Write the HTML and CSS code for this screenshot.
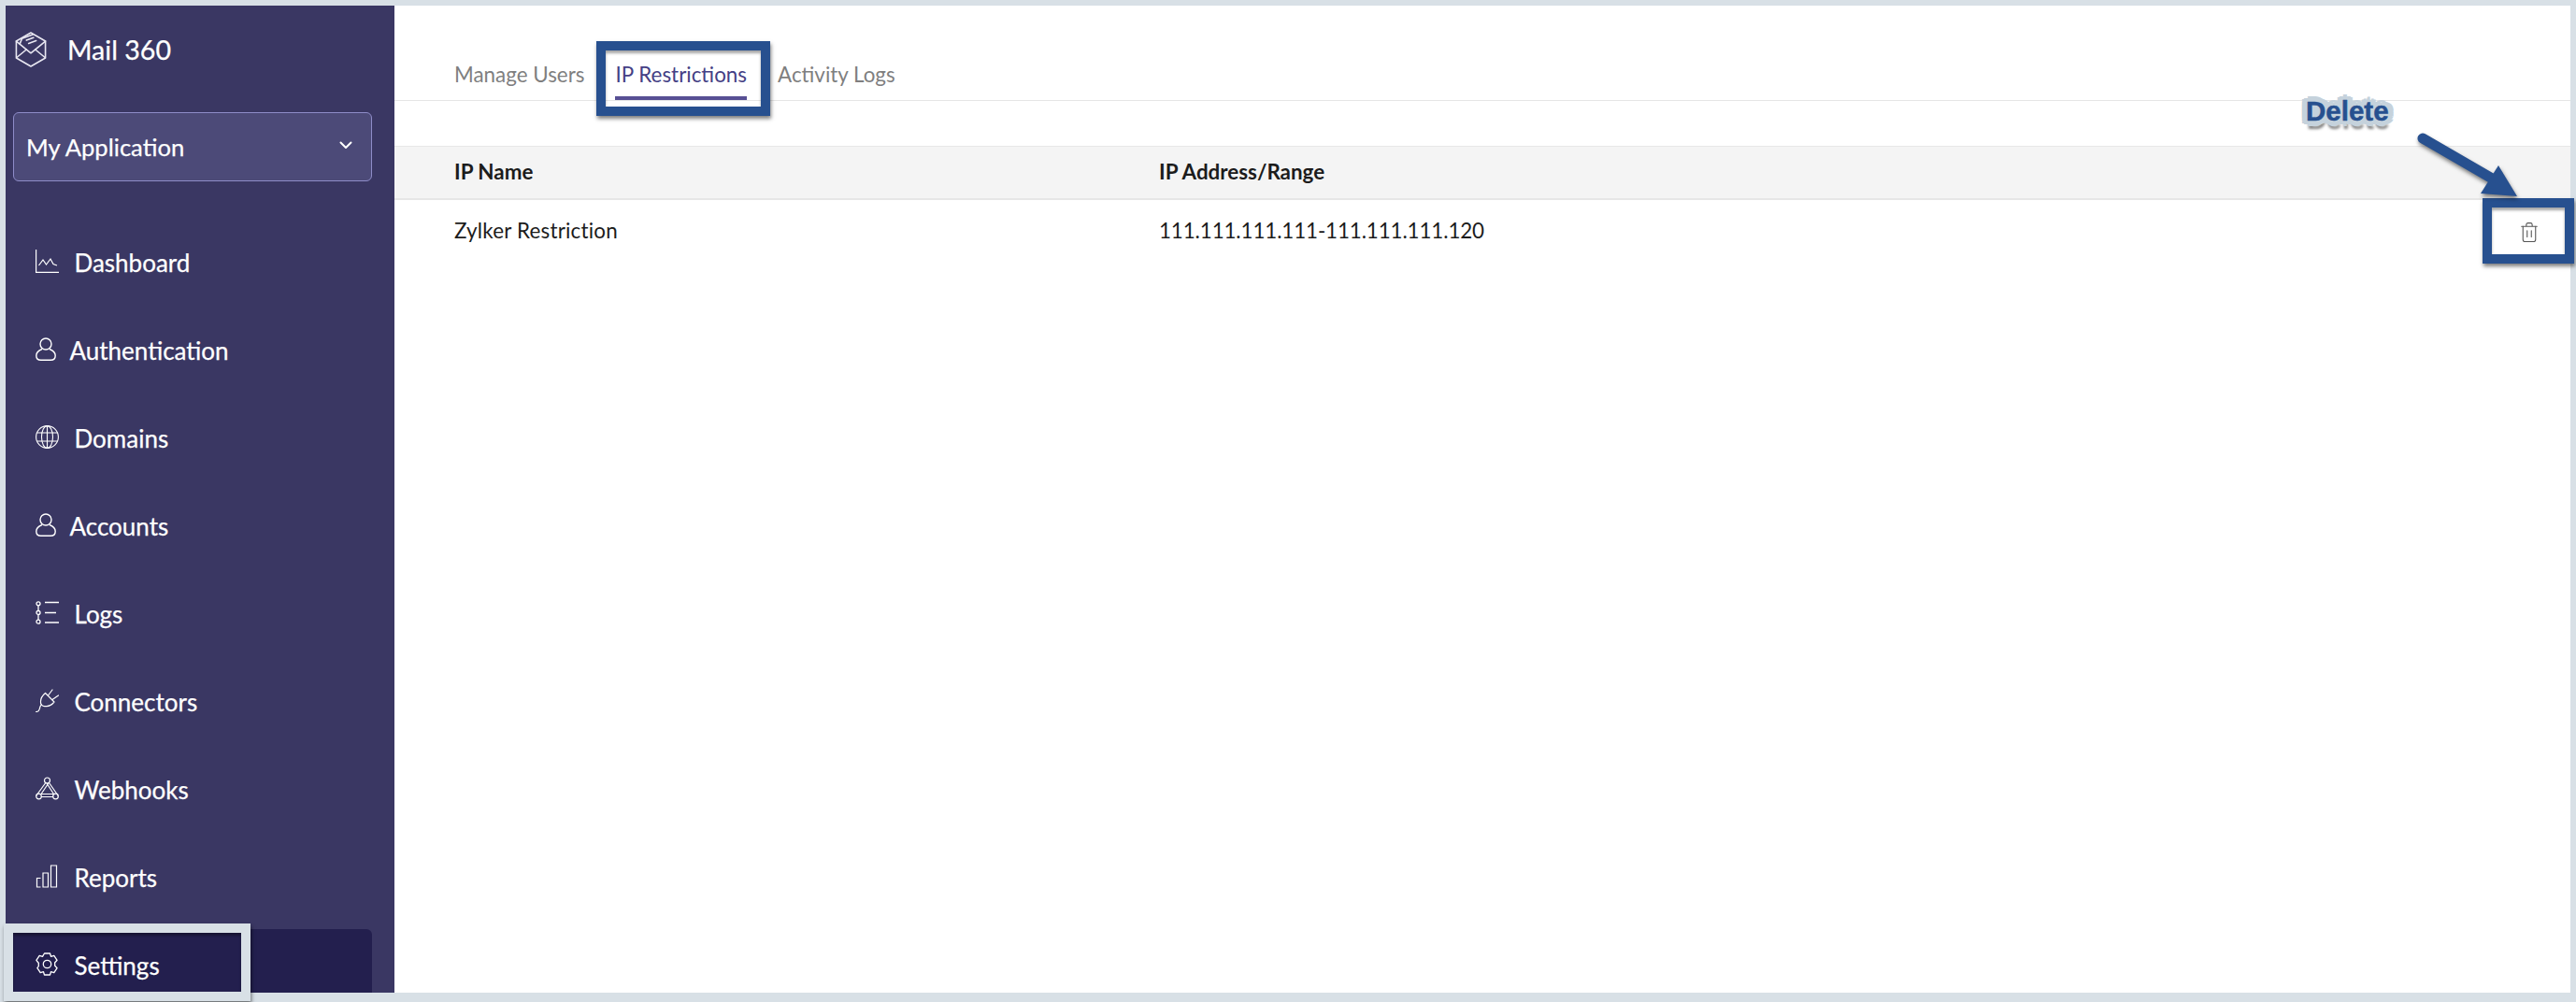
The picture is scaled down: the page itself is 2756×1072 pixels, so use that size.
FILE: index.html
```html
<!DOCTYPE html>
<html lang="en">
<head>
<meta charset="utf-8">
<title>Mail 360 - IP Restrictions</title>
<link rel="stylesheet" href="styles.css">
</head>
<body>
<div class="app">
  <aside class="sidebar">
    <div class="brand">
      <svg class="brand-logo" viewBox="0 0 36 40" fill="none" stroke="currentColor" stroke-width="1.7" stroke-linejoin="round" stroke-linecap="round">
        <path d="M18 1 34.500 10.500v19L18 39 1.500 29.500v-19z"/>
        <path d="M1.500 10.500 18 24l16.500-13.500"/>
        <path d="M2 29 13 20M34 29 23 20"/>
        <path d="M5.500 13.500 8 7.500 20 3"/>
        <path d="M13 9.500 21 6.500M15.500 13 24 10"/>
      </svg>
      <span class="brand-name">Mail 360</span>
    </div>
    <div class="app-select">
      <span>My Application</span>
      <svg class="chevron" viewBox="0 0 14 9" fill="none" stroke="currentColor" stroke-width="2" stroke-linecap="round" stroke-linejoin="round"><path d="M1.500 1.500 7 7l5.500-5.500"/></svg>
    </div>
    <nav class="nav">
      <a class="nav-item">
        <svg class="nav-icon" viewBox="0 0 25 25" fill="none" stroke="currentColor" stroke-width="1.200"><path d="M.6 0v24.400H25"/><path d="M3.500 17 8 11l3.500 5L16 10l3 5.500 4 1.500"/></svg>
        <span>Dashboard</span>
      </a>
      <a class="nav-item">
        <svg class="nav-icon nav-icon-person" viewBox="0 0 25 25" fill="none" stroke="currentColor" stroke-width="1.400"><circle cx="11" cy="7" r="6"/><path d="M7 12.500C3 14 .8 16.500.8 19.500c0 3 2 4.800 5 4.800h10.400c3 0 5-1.800 5-4.800 0-3-2.200-5.500-6.200-7"/></svg>
        <span>Authentication</span>
      </a>
      <a class="nav-item">
        <svg class="nav-icon" viewBox="0 0 25 25" fill="none" stroke="currentColor" stroke-width="1.100"><circle cx="12.500" cy="12.500" r="11.900"/><ellipse cx="12.500" cy="12.500" rx="6" ry="11.900"/><path d="M12.500.6v23.800M1.800 8h21.400M1.800 17h21.400"/></svg>
        <span>Domains</span>
      </a>
      <a class="nav-item">
        <svg class="nav-icon nav-icon-person" viewBox="0 0 25 25" fill="none" stroke="currentColor" stroke-width="1.400"><circle cx="11" cy="7" r="6"/><path d="M7 12.500C3 14 .8 16.500.8 19.500c0 3 2 4.800 5 4.800h10.400c3 0 5-1.800 5-4.800 0-3-2.200-5.500-6.200-7"/></svg>
        <span>Accounts</span>
      </a>
      <a class="nav-item">
        <svg class="nav-icon" viewBox="0 0 25 25" fill="none" stroke="currentColor" stroke-width="1.300"><circle cx="3" cy="2.800" r="2"/><circle cx="3" cy="12.500" r="2"/><circle cx="3" cy="22.200" r="2"/><path d="M3 4.800v5.700M3 14.500v5.700"/><path d="M10 1.500h15M10 12.500h12M10 23h15"/></svg>
        <span>Logs</span>
      </a>
      <a class="nav-item">
        <svg class="nav-icon" viewBox="0 0 25 25" fill="none" stroke="currentColor" stroke-width="1.200" stroke-linecap="round" stroke-linejoin="round"><path d="M.6 24.500c2.500 0 3.300-1 3.700-3 .3-1.500.5-3 1.800-4.300"/><path d="M10.500 4.500 20 14c-2.500 3-6.500 5-9.500 4.500-3 .5-5.500-2-5-5 0-3 2-6.500 5-9z"/><path d="M13.500 7 18 1M18 11.500 24.500 7"/></svg>
        <span>Connectors</span>
      </a>
      <a class="nav-item">
        <svg class="nav-icon" viewBox="0 0 25 25" fill="none" stroke="currentColor" stroke-width="1.200" stroke-linecap="round" stroke-linejoin="round"><circle cx="12.500" cy="4" r="3"/><circle cx="3.500" cy="21" r="2.800"/><circle cx="21.500" cy="21" r="2.800"/><path d="M10.800 6.500 1 20M6.500 21.500h12M14.500 6.500 24 20"/><path d="M13.800 7 6 18.500h13.500L12 7"/></svg>
        <span>Webhooks</span>
      </a>
      <a class="nav-item">
        <svg class="nav-icon" viewBox="0 0 25 25" fill="none" stroke="currentColor" stroke-width="1.200"><path d="M5.500 24H1.500V14.500h4M8 24V9h5.500v15zM16.500 24V1h6v23z"/></svg>
        <span>Reports</span>
      </a>
      <a class="nav-item nav-item-active">
        <svg class="nav-icon" viewBox="0 0 25 25" fill="none" stroke="currentColor" stroke-width="1.300" stroke-linejoin="round"><path d="M9.500 1h6l1 3.300 3.300-1 3.300 5-2.500 2.700c.2 1 .2 2 0 3l2.500 2.700-3.300 5-3.300-1-1 3.300h-6l-1-3.300-3.300 1-3.300-5L3.400 14.500c-.2-1-.2-2 0-3L.900 8.300l3.300-5 3.300 1z"/><circle cx="12.500" cy="12.500" r="4.200"/></svg>
        <span>Settings</span>
      </a>
    </nav>
  </aside>
  <main class="main">
    <div class="tabs">
      <span class="tab">Manage Users</span>
      <span class="tab tab-active">IP Restrictions</span>
      <span class="tab">Activity Logs</span>
    </div>
    <div class="table-head">
      <span>IP Name</span>
      <span>IP Address/Range</span>
    </div>
    <div class="table-row">
      <span class="cell cell-name">Zylker Restriction</span>
      <span class="cell cell-range">111.111.111.111-111.111.111.120</span>
      <svg class="trash" viewBox="0 0 20 24" fill="none" stroke="currentColor" stroke-width="1.200" stroke-linecap="round" stroke-linejoin="round"><path d="M.8 5h18.400M6.500 5V3c0-1.200.8-2 2-2h3c1.200 0 2 .8 2 2v2"/><path d="M2.500 5v15.500c0 1.500 1 2.700 2.700 2.700h9.600c1.700 0 2.700-1.200 2.700-2.700V5"/><path d="M7.500 10v7.500M12.500 10v7.500"/></svg>
    </div>
  </main>
</div>

<div class="callout callout-settings"></div>
<div class="callout callout-tab"></div>
<div class="callout callout-delete"></div>
<span class="delete-label">Delete</span>
<svg class="delete-arrow" viewBox="0 0 120 80" fill="#27508f"><path d="M7 5 83 49" stroke="#27508f" stroke-width="11" stroke-linecap="round" fill="none"/><path d="M88 34 108 67 69 64z"/></svg>
</body>
</html>
```

FILE: styles.css
```css
* {
  box-sizing: border-box;
}

html,
body {
  margin: 0;
  height: 1072px;
  overflow: hidden;
}

body {
  position: relative;
  padding: 6px 6px 10px;
  background: #d8e0e6;
  font-family: "Lato", "Liberation Sans", sans-serif;
}

.app {
  display: flex;
  height: 100%;
  background: #fff;
}

.sidebar {
  flex: 0 0 416px;
  display: flex;
  flex-direction: column;
  padding: 0 24px 0 8px;
  overflow: hidden;
  background: #3a3763;
  color: #fff;
  -webkit-text-stroke: 0.25px #fff;
}

.brand {
  display: flex;
  flex: none;
  align-items: center;
  gap: 22px;
  height: 94px;
  padding: 0 0 0 2px;
}

.brand-logo {
  flex: none;
  width: 34px;
  height: 38px;
  color: #e8e7f1;
}

.brand-name {
  font-size: 28.600px;
  line-height: 1;
}

.app-select {
  display: flex;
  flex: none;
  align-items: center;
  justify-content: space-between;
  height: 74px;
  margin-top: 20px;
  padding: 0 20px 0 13px;
  border: 1.500px solid #8e8cc8;
  border-radius: 6px;
  background: #4c4a78;
  font-size: 25.600px;
}

.chevron {
  width: 14px;
  height: 9px;
  margin-bottom: 4px;
}

.nav {
  display: flex;
  flex: none;
  flex-direction: column;
  gap: 16px;
  margin-top: 48px;
}

.nav-item {
  display: flex;
  align-items: center;
  gap: 16.500px;
  height: 78px;
  padding-left: 24px;
  border-radius: 6px;
  font-size: 26px;
}

.nav-item-active {
  background: #231f4e;
}

.nav-icon {
  flex: none;
  width: 25px;
  height: 25px;
  margin-top: -3px;
}

.nav-icon-person {
  margin-right: -5px;
}

.main {
  flex: 1;
  display: flex;
  flex-direction: column;
  min-width: 0;
  color: #1c1c1c;
  font-size: 22.400px;
}

.tabs {
  display: flex;
  flex: none;
  gap: 33px;
  height: 102px;
  padding: 59px 0 0 64px;
  border-bottom: 1px solid #e5e5e5;
  color: #7f7f7f;
}

.tab {
  height: 42px;
  line-height: 30px;
}

.tab-active {
  border-bottom: 4px solid #574f94;
  color: #453f85;
}

.table-head {
  display: grid;
  flex: none;
  grid-template-columns: 754px 1fr;
  align-items: center;
  height: 58px;
  margin-top: 48px;
  padding: 0 0 3px 64px;
  border-top: 1px solid #e8e8e8;
  border-bottom: 2px solid #e6e6e6;
  background: #f4f4f4;
  font-weight: 700;
}

.table-row {
  display: grid;
  flex: none;
  grid-template-columns: 754px 1fr auto;
  align-items: center;
  height: 68px;
  padding: 0 35px 0 64px;
}

.cell {
  margin-bottom: 4px;
}

.cell-name {
  letter-spacing: 0.2px;
}

.cell-range {
  letter-spacing: -0.12px;
}

.trash {
  width: 18px;
  height: 23px;
  color: #555;
}

.callout {
  position: absolute;
  border: 10px solid #27508f;
  box-shadow: 1px 3px 4px rgba(0, 0, 0, 0.5), inset 0 3px 3px rgba(0, 0, 0, 0.35);
}

.callout-settings {
  left: 4px;
  top: 988px;
  width: 264px;
  height: 83px;
  border-color: #d8e0e6;
}

.callout-tab {
  left: 638px;
  top: 44px;
  width: 186px;
  height: 80px;
}

.callout-delete {
  left: 2656px;
  top: 212px;
  width: 98px;
  height: 70px;
}

.delete-label {
  position: absolute;
  left: 2467px;
  top: 102px;
  color: #27508f;
  font-family: "Liberation Sans", sans-serif;
  font-size: 29.500px;
  font-weight: 700;
  line-height: 34px;
  -webkit-text-stroke: 0.5px #27508f;
  text-shadow:
    6px 0 0 #c5d2dc, -6px 0 0 #c5d2dc, 0 6px 0 #c5d2dc, 0 -6px 0 #c5d2dc,
    4px 4px 0 #c5d2dc, -4px 4px 0 #c5d2dc, 4px -4px 0 #c5d2dc, -4px -4px 0 #c5d2dc,
    3px 0 0 #c5d2dc, -3px 0 0 #c5d2dc, 0 3px 0 #c5d2dc, 0 -3px 0 #c5d2dc,
    6px 3px 0 #c5d2dc, -6px 3px 0 #c5d2dc, 6px -3px 0 #c5d2dc, -6px -3px 0 #c5d2dc,
    1px 9px 3px rgba(0, 0, 0, 0.5);
}

.delete-arrow {
  position: absolute;
  left: 2585px;
  top: 143px;
  width: 120px;
  height: 80px;
  overflow: visible;
  filter: drop-shadow(1px 3px 2px rgba(0, 0, 0, 0.5));
}
```
